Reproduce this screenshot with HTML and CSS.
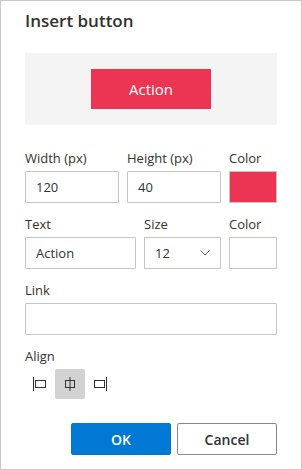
FILE: index.html
```html
<!DOCTYPE html>
<html lang="en">
  <head>
    <meta charset="UTF-8" />
    <meta name="viewport" content="width=device-width, initial-scale=1.0" />
    <title>Insert button</title>
    <link rel="stylesheet" href="styles.css">
  </head>
  <body>
    <div class="dialog">
      <h1 class="title">Insert button</h1>

      <div class="preview">
        <div class="preview-btn">Action</div>
      </div>

      <div class="row row-size">
        <div class="field">
          <label>Width (px)</label>
          <input type="text" class="input" value="120" />
        </div>
        <div class="field">
          <label>Height (px)</label>
          <input type="text" class="input" value="40" />
        </div>
        <div class="field">
          <label>Color</label>
          <div class="swatch swatch-red"></div>
        </div>
      </div>

      <div class="row row-text">
        <div class="field">
          <label>Text</label>
          <input type="text" class="input" value="Action" />
        </div>
        <div class="field">
          <label>Size</label>
          <div class="select">
            <span>12</span>
            <svg width="10" height="6" viewBox="0 0 10 6">
              <path d="M0.5 0.5 L5 5 L9.5 0.5" fill="none" stroke="#605e5c" stroke-width="1" />
            </svg>
          </div>
        </div>
        <div class="field">
          <label>Color</label>
          <div class="swatch"></div>
        </div>
      </div>

      <div class="row">
        <div class="field">
          <label>Link</label>
          <input type="text" class="input" value="" />
        </div>
      </div>

      <div class="row">
        <div class="field">
          <label>Align</label>
          <div class="align">
            <button class="align-btn" title="Left">
              <svg width="16" height="16" viewBox="0 0 16 16">
                <path d="M1.5 1 V15" stroke="#323130" fill="none" />
                <rect x="3.5" y="4.5" width="10" height="7" stroke="#323130" fill="none" />
              </svg>
            </button>
            <button class="align-btn active" title="Center">
              <svg width="16" height="16" viewBox="0 0 16 16">
                <path d="M8 1 V15" stroke="#323130" fill="none" />
                <rect x="3.5" y="4.5" width="9" height="7" stroke="#323130" fill="none" />
              </svg>
            </button>
            <button class="align-btn" title="Right">
              <svg width="16" height="16" viewBox="0 0 16 16">
                <path d="M14.5 1 V15" stroke="#323130" fill="none" />
                <rect x="2.5" y="4.5" width="10" height="7" stroke="#323130" fill="none" />
              </svg>
            </button>
          </div>
        </div>
      </div>

      <div class="footer">
        <button class="btn btn-primary">OK</button>
        <button class="btn">Cancel</button>
      </div>
    </div>
  </body>
</html>
```

FILE: styles.css
```css
* {
  box-sizing: border-box;
}

body {
  margin: 0;
  font-family: "Open Sans", "Noto Sans", sans-serif;
  color: #323130;
  background: #fff;
}

.dialog {
  width: 302px;
  height: 470px;
  border: 1px solid #c8c8c8;
  padding: 8px 24px 0;
}

.title {
  margin: 0;
  font-size: 17px;
  font-weight: 600;
  line-height: 24px;
}

.preview {
  margin-top: 20px;
  height: 72px;
  background: #f4f4f4;
  display: flex;
  align-items: center;
  justify-content: center;
}

.preview-btn {
  width: 120px;
  height: 40px;
  background: #ec3453;
  color: #fff;
  font-size: 15px;
  display: flex;
  align-items: center;
  justify-content: center;
}

.row {
  display: grid;
  grid-template-columns: 1fr;
  gap: 8px;
  margin-top: 12px;
}

.row-size {
  grid-template-columns: 94px 94px 48px;
  margin-top: 24px;
}

.row-text {
  grid-template-columns: 111px 77px 48px;
}

.field label {
  display: block;
  font-size: 13px;
  line-height: 18px;
  margin-bottom: 4px;
}

.input {
  display: block;
  width: 100%;
  height: 32px;
  border: 1px solid #c8c6c4;
  border-radius: 1px;
  padding: 0 10px;
  font-family: inherit;
  font-size: 13px;
  color: #323130;
  outline: none;
}

.swatch {
  height: 32px;
  border: 1px solid #c8c6c4;
  background: #fff;
}

.swatch-red {
  background: #ec3453;
}

.select {
  height: 32px;
  border: 1px solid #c8c6c4;
  padding: 0 10px 0 10px;
  font-size: 13px;
  display: flex;
  align-items: center;
  justify-content: space-between;
}

.align {
  display: flex;
}

.align-btn {
  width: 30px;
  height: 30px;
  border: none;
  border-radius: 2px;
  background: transparent;
  padding: 0;
  display: flex;
  align-items: center;
  justify-content: center;
}

.align-btn.active {
  background: #d2d2d2;
}

.footer {
  display: flex;
  justify-content: flex-end;
  gap: 6px;
  margin-top: 24px;
}

.btn {
  width: 100px;
  height: 32px;
  border: 1px solid #8a8886;
  border-radius: 2px;
  background: #fff;
  color: #323130;
  font-family: inherit;
  font-size: 14px;
  font-weight: 600;
}

.btn-primary {
  background: #0078d4;
  border-color: #0078d4;
  color: #fff;
}
```
